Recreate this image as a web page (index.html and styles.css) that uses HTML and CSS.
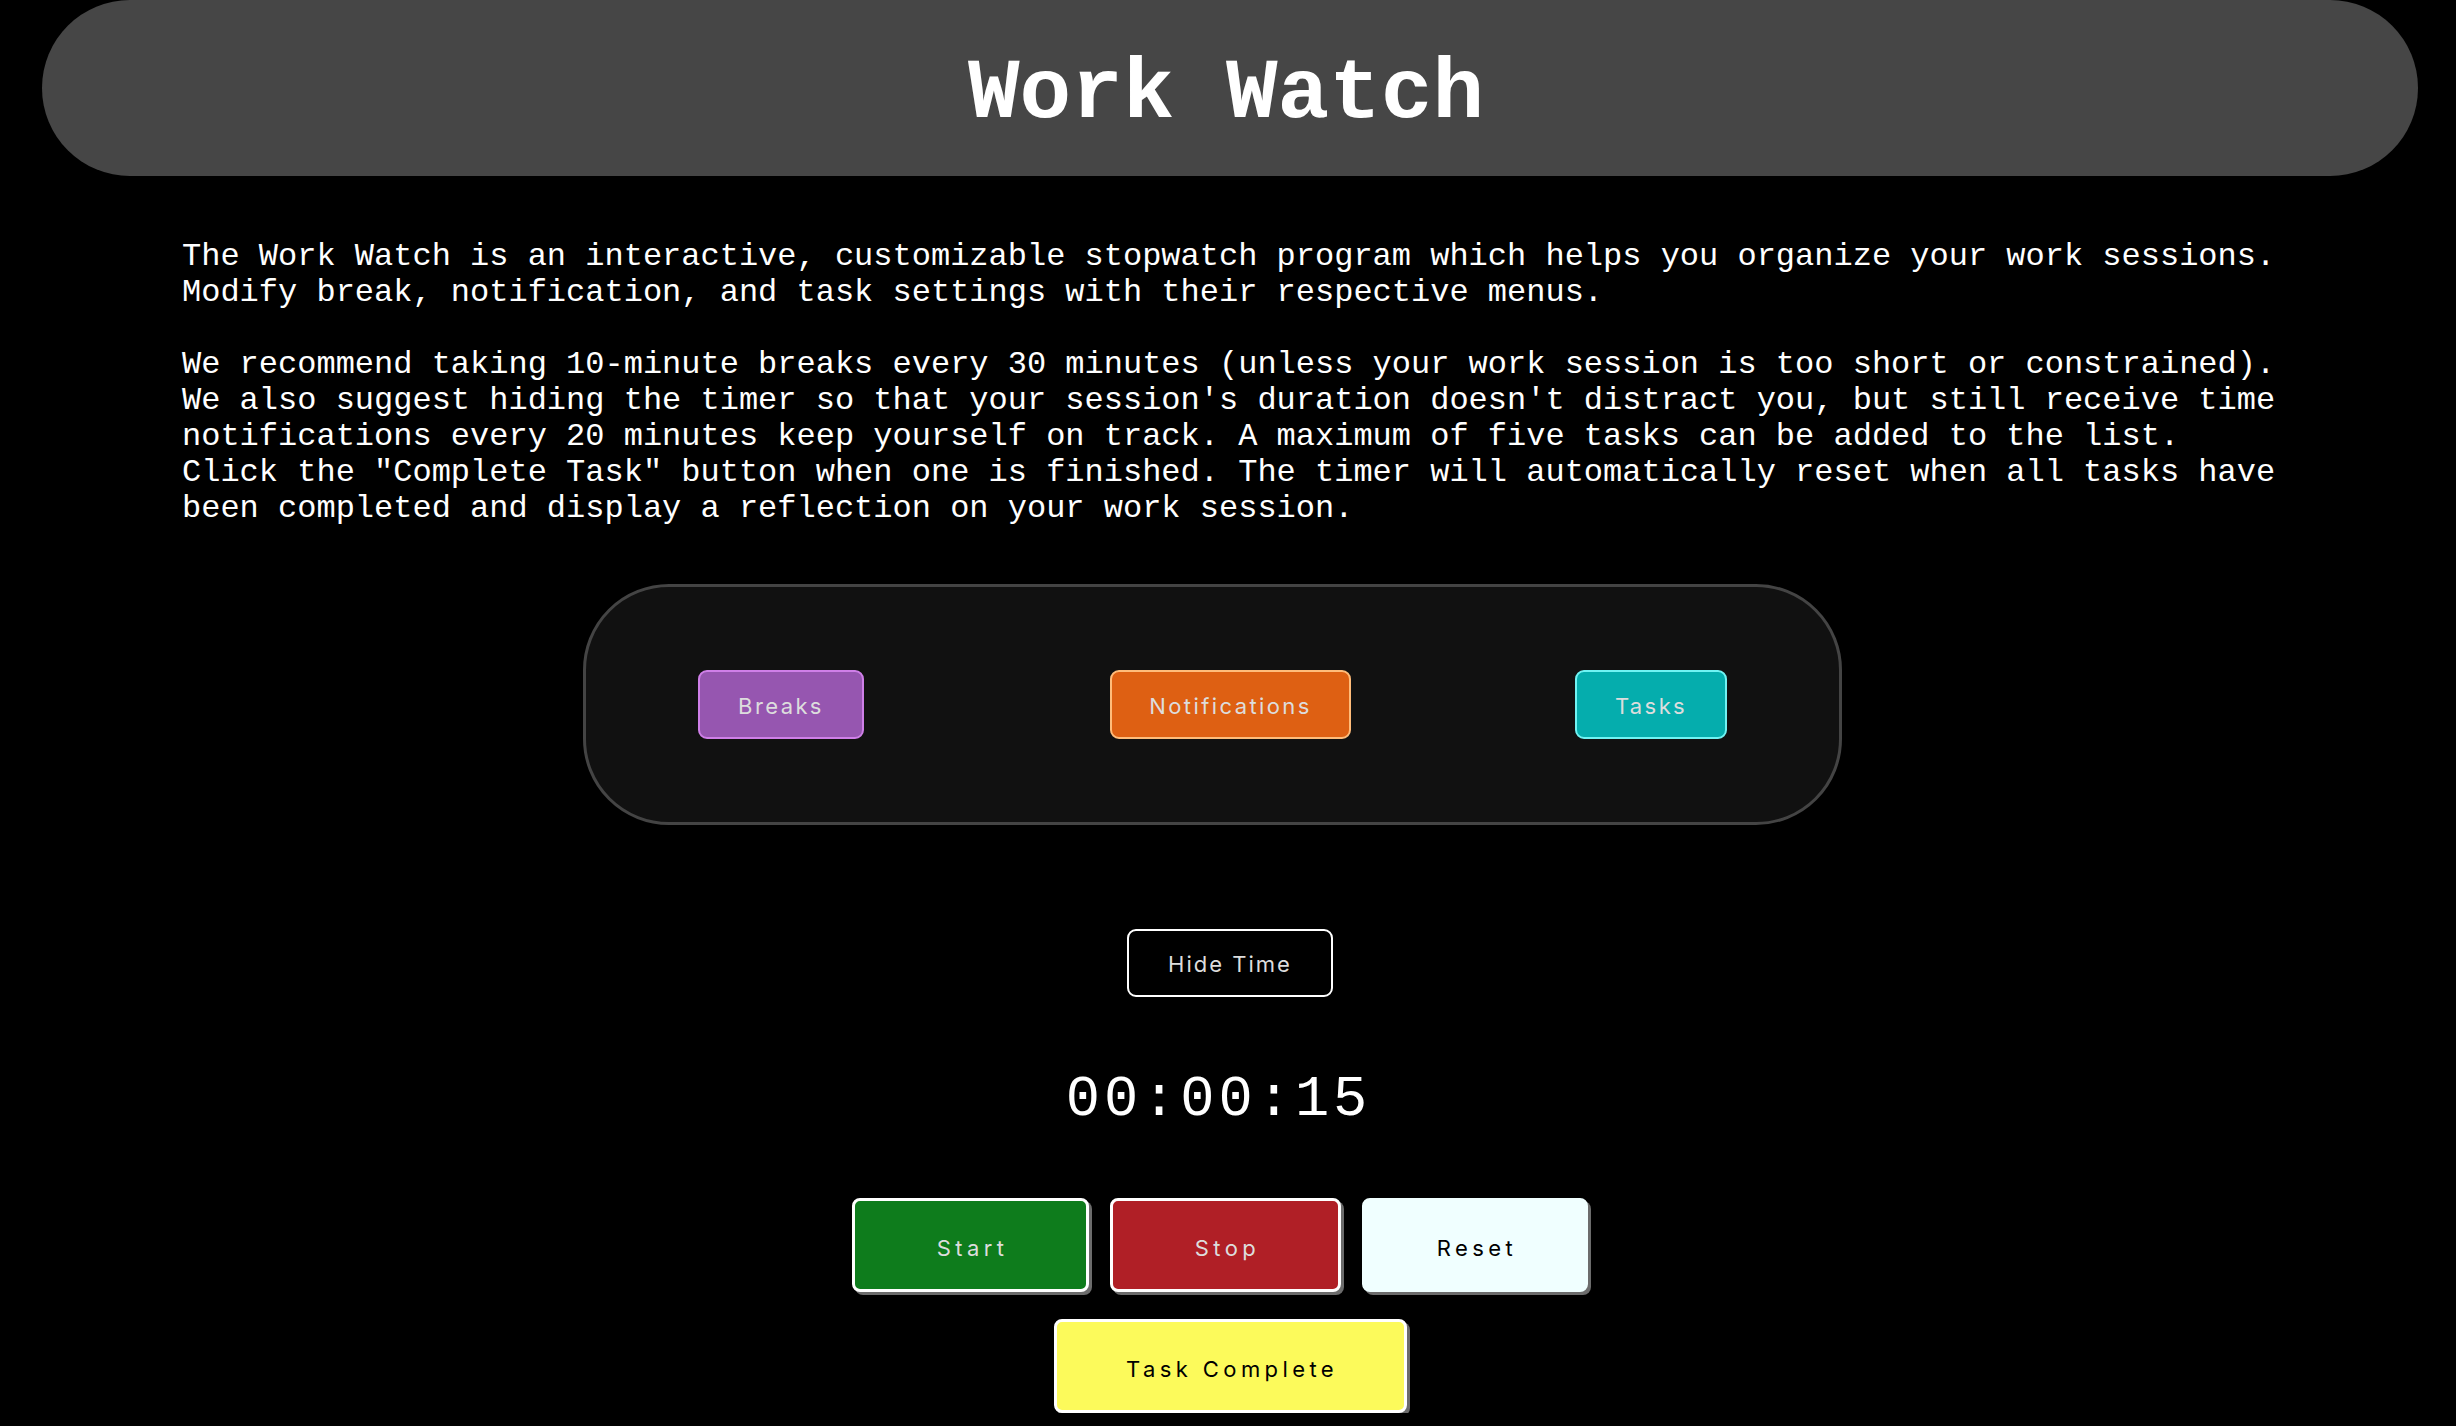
FILE: index.html
```html
<!DOCTYPE html>
<html lang="en">
<head>
<meta charset="utf-8">
<title>Work Watch</title>
<link rel="stylesheet" href="styles.css">
</head>
<body>
<header class="banner">
  <h1 class="title">Work Watch</h1>
</header>
<main class="main">
  <p class="intro">The Work Watch is an interactive, customizable stopwatch program which helps you organize your work sessions. Modify break, notification, and task settings with their respective menus.<br><br>We recommend taking 10-minute breaks every 30 minutes (unless your work session is too short or constrained). We also suggest hiding the timer so that your session's duration doesn't distract you, but still receive time notifications every 20 minutes keep yourself on track. A maximum of five tasks can be added to the list. Click the "Complete Task" button when one is finished. The timer will automatically reset when all tasks have been completed and display a reflection on your work session.</p>

  <section class="panel">
    <button class="menu-btn breaks">Breaks</button>
    <button class="menu-btn notifications">Notifications</button>
    <button class="menu-btn tasks">Tasks</button>
  </section>

  <div class="hide-row">
    <button class="hide-btn">Hide Time</button>
  </div>

  <div class="timer">00:00:15</div>

  <div class="controls">
    <button class="ctrl start">Start</button>
    <button class="ctrl stop">Stop</button>
    <button class="ctrl reset">Reset</button>
  </div>
  <div class="controls second">
    <button class="ctrl complete">Task Complete</button>
  </div>
</main>
</body>
</html>
```

FILE: styles.css
```css
html, body {
  margin: 0;
  padding: 0;
  background: #000;
}

body {
  padding: 0 38px 0 42px;
  color: #fff;
  font-family: "Liberation Mono", "DejaVu Sans Mono", monospace;
}

.banner {
  height: 176px;
  background: #464646;
  border-radius: 88px;
  display: flex;
  align-items: center;
  justify-content: center;
}

.title {
  margin: 0;
  font-family: "Liberation Mono", monospace;
  font-weight: bold;
  font-size: 86px;
  line-height: 1;
  color: #fff;
  padding: 12px 8px 0 0;
}

.main {
  display: flex;
  flex-direction: column;
}

.intro {
  margin: 63px 0 0 140px;
  width: 2100px;
  font-size: 32px;
  line-height: 36px;
  color: #fff;
}

.panel {
  margin: 57px 0 0 541px;
  width: 1259px;
  height: 241px;
  box-sizing: border-box;
  border: 3px solid #444;
  border-radius: 86px;
  background: #111;
  display: flex;
  align-items: center;
  padding-left: 112px;
}

.menu-btn {
  height: 69px;
  box-sizing: border-box;
  border-radius: 9px;
  border: 2px solid;
  font-family: "Inter", "Liberation Sans", sans-serif;
  font-size: 22px;
  letter-spacing: 2.4px;
  color: #ddd;
  padding: 2px 0 0 0;
}

.breaks {
  width: 166px;
  background: #9656b0;
  border-color: #cf7fe8;
}

.notifications {
  width: 241px;
  margin-left: 246px;
  background: #de6013;
  border-color: #ffbc7a;
}

.tasks {
  width: 152px;
  margin-left: 224px;
  background: #05adad;
  border-color: #70f3f3;
}

.hide-row {
  margin-top: 104px;
  display: flex;
  justify-content: center;
}

.hide-btn {
  width: 206px;
  height: 68px;
  box-sizing: border-box;
  background: #000;
  border: 2px solid #fff;
  border-radius: 9px;
  color: #ddd;
  font-family: "Inter", "Liberation Sans", sans-serif;
  font-size: 22px;
  letter-spacing: 2px;
  padding: 2px 0 0 0;
}

.timer {
  margin-top: 71px;
  text-align: center;
  padding-right: 23px;
  font-family: "Liberation Mono", "DejaVu Sans Mono", monospace;
  font-size: 57px;
  line-height: 64px;
  letter-spacing: 4px;
  color: #fff;
}

.controls {
  margin-top: 66px;
  display: flex;
  justify-content: center;
  gap: 21px;
  padding-right: 20px;
}

.controls.second {
  margin-top: 27px;
  padding-right: 0;
}

.ctrl {
  height: 94px;
  box-sizing: border-box;
  border: 3px solid #fff;
  border-radius: 8px;
  box-shadow: 3px 3px 0 #6c6c6c;
  font-family: "Inter", "Liberation Sans", sans-serif;
  font-size: 22px;
  letter-spacing: 4.4px;
  padding: 5px 0 0 4px;
}

.start {
  width: 237px;
  background: #0e7c1c;
  color: #ddd;
}

.stop {
  width: 231px;
  background: #b01f26;
  color: #ddd;
}

.reset {
  width: 226px;
  background: #f0ffff;
  border-color: #f0ffff;
  color: #000;
}

.complete {
  width: 353px;
  background: #fcfa5b;
  color: #000;
}
```
